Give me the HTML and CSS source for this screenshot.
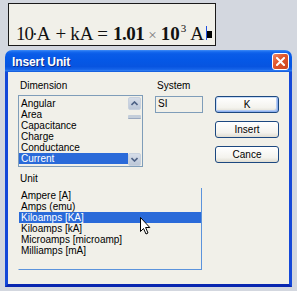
FILE: index.html
```html
<!DOCTYPE html>
<html>
<head>
<meta charset="utf-8">
<link rel="stylesheet" href="styles.css">
</head>
<body>
<div class="page">
  <div class="formula">
    <span class="tok t-10">10</span><span class="tok t-dot">·</span><span class="tok t-a1">A</span>
    <span class="tok t-plus">+</span>
    <span class="tok t-ka">kA</span>
    <span class="tok t-eq">=</span>
    <span class="tok t-res">1.01</span>
    <span class="tok t-times">×</span>
    <span class="tok t-res t-pow">10<sup class="sup">3</sup></span>
    <span class="tok t-a2">A</span><span class="caret"></span><span class="block"></span>
  </div>

  <div class="dialog">
    <div class="titlebar">
      <span class="title">Insert Unit</span>
      <span class="close">
        <svg width="9" height="9" viewBox="0 0 9 9"><path d="M1 1 L8 8 M8 1 L1 8" stroke="#fff" stroke-width="2" stroke-linecap="square" fill="none"/></svg>
      </span>
    </div>
    <div class="body">
      <div class="top">
        <div class="col dim">
          <div class="label">Dimension</div>
          <div class="listbox">
            <ul class="items">
              <li>Angular</li>
              <li>Area</li>
              <li>Capacitance</li>
              <li>Charge</li>
              <li>Conductance</li>
              <li class="sel">Current</li>
            </ul>
            <div class="scrollbar">
              <div class="sbtn">
                <svg width="7" height="5" viewBox="0 0 7 5"><path d="M0.5 4 L3.5 1 L6.5 4" stroke="#4d6185" stroke-width="1.6" fill="none"/></svg>
              </div>
              <div class="thumb"></div>
              <div class="track"></div>
              <div class="sbtn">
                <svg width="7" height="5" viewBox="0 0 7 5"><path d="M0.5 1 L3.5 4 L6.5 1" stroke="#4d6185" stroke-width="1.6" fill="none"/></svg>
              </div>
            </div>
          </div>
        </div>
        <div class="col sys">
          <div class="label">System</div>
          <div class="field">SI</div>
        </div>
        <div class="buttons">
          <div class="btn default">K</div>
          <div class="btn">Insert</div>
          <div class="btn">Cance</div>
        </div>
      </div>
      <div class="unit">
        <div class="label">Unit</div>
        <ul class="unitlist">
          <li>Ampere [A]</li>
          <li>Amps (emu)</li>
          <li class="sel">Kiloamps [KA]</li>
          <li>Kiloamps [kA]</li>
          <li>Microamps [microamp]</li>
          <li>Milliamps [mA]</li>
        </ul>
      </div>
      <svg class="pointer" width="11" height="18" viewBox="0 0 11 18">
        <path d="M0.5 0.5 L0.5 14.5 L3.5 11.5 L6 17 L8 16 L5.6 10.5 L9.8 10.5 Z" fill="#fff" stroke="#000" stroke-width="1"/>
      </svg>
    </div>
  </div>
</div>
</body>
</html>
```
FILE: styles.css
```css
* { box-sizing: border-box; }
html, body { margin: 0; padding: 0; }
body {
  background: #d3d7df;
  width: 297px;
  height: 291px;
  overflow: hidden;
  font-family: "Liberation Sans", Arial, sans-serif;
}
.page {
  padding: 3px 0 0 8px;
}
.formula {
  width: 208px;
  height: 43px;
  border: 1px solid #1a1a1a;
  background: #f1f0e9;
  display: flex;
  align-items: baseline;
  padding: 14px 0 0 7px;
  font-family: "Liberation Serif", "Times New Roman", serif;
  font-size: 19px;
  line-height: 21px;
  color: #111;
  overflow: hidden;
}
.tok { white-space: pre; }
.t-10 { letter-spacing: -1px; }
.t-dot { font-size: 17px; margin-left: -1px; }
.t-a1 { margin-left: -1px; }
.t-plus { margin-left: 5px; }
.t-ka { margin-left: 4px; }
.t-eq { margin-left: 4px; }
.t-res { margin-left: 5px; font-weight: bold; letter-spacing: -0.5px; }
.t-times { margin-left: 4px; color: #777; font-size: 15px; }
.t-pow { margin-left: 4px; letter-spacing: 0; }
.sup { font-size: 11px; font-weight: normal; vertical-align: 8px; margin-left: 1px; }
.t-a2 { margin-left: 4px; }
.caret {
  display: inline-block;
  width: 1px;
  height: 14px;
  background: #2050e0;
  margin-left: 2px;
  align-self: center;
  transform: translateY(1px);
}
.block {
  display: inline-block;
  width: 5px;
  height: 7px;
  background: #000;
  align-self: center;
  transform: translateY(3px);
}

.dialog {
  margin: 4px 0 0 -3px;
  width: 287px;
  height: 237px;
  display: flex;
  flex-direction: column;
}
.titlebar {
  height: 22px;
  border-radius: 7px 7px 0 0;
  background: linear-gradient(#3f8cf7 0, #1468ee 2px, #0a5ce8 4px, #0558e6 45%, #0754e0 75%, #1462e8 88%, #2e7bf0 94%, #0a52d6 100%);
  display: flex;
  align-items: center;
  justify-content: space-between;
  padding: 0 3px 0 7px;
  position: relative;
}
.title {
  color: #fff;
  font-weight: bold;
  font-size: 12px;
  letter-spacing: -0.1px;
  text-shadow: 1px 1px 0 #0a2a8a;
  margin-top: 1px;
}
.close {
  width: 17px;
  height: 17px;
  border: 1px solid #fff;
  border-radius: 3px;
  background: linear-gradient(135deg, #f08a6a 0, #e0582e 40%, #cc4520 100%);
  display: flex;
  align-items: center;
  justify-content: center;
  margin-top: 1px;
}
.body {
  flex: 1;
  background: #f1f0e9;
  border-left: 3px solid #1448d8;
  border-right: 3px solid #1448d8;
  border-bottom: 3px solid #0826b0;
  position: relative;
  padding: 8px 0 0 10px;
  font-size: 10px;
  color: #000;
}
.label {
  height: 11px;
  line-height: 11px;
  padding-left: 2px;
}
.top {
  display: flex;
  align-items: flex-start;
}
.col.dim { width: 125px; }
.col.sys { width: 48px; margin-left: 12px; }
.listbox {
  margin-top: 4px;
  height: 72px;
  border: 1px solid #7f9db9;
  display: flex;
  padding: 2px 1px 0 0;
}
ul { list-style: none; margin: 0; padding: 0; }
.items {
  flex: 1;
}
.items li, .unitlist li {
  height: 11px;
  line-height: 11px;
  padding-left: 2px;
  white-space: nowrap;
}
.items li.sel, .unitlist li.sel {
  background: #2a6ad9;
  color: #fff;
}
.scrollbar {
  width: 13px;
  display: flex;
  flex-direction: column;
  margin-top: -1px;
}
.sbtn {
  height: 13px;
  border-radius: 2px;
  background: linear-gradient(#d6dde8, #bcc7d8);
  border: 1px solid #c8d1de;
  display: flex;
  align-items: center;
  justify-content: center;
}
.thumb {
  height: 4px;
  margin-top: 5px;
  border-radius: 1px;
  background: #c4ceda;
  border-bottom: 1px solid #9aa8bf;
}
.track { flex: 1; }
.field {
  margin-top: 5px;
  height: 17px;
  border: 1px solid #7f9db9;
  line-height: 14px;
  padding-left: 2px;
}
.buttons {
  margin-left: 12px;
  margin-top: 16px;
  display: flex;
  flex-direction: column;
  gap: 8px;
}
.btn {
  width: 64px;
  height: 17px;
  border: 1px solid #1c4880;
  border-radius: 3px;
  background: linear-gradient(#ffffff, #f4f3ee 70%, #e0ddd2);
  text-align: center;
  line-height: 15px;
}
.btn.default {
  box-shadow: inset -1px -1px 0 #8eb0ef, inset 1px 1px 0 #c8dcf8, inset -2px -2px 0 #b4cbf2;
}
.unit {
  margin-top: 6px;
}
.unitlist {
  margin-top: 4px;
  width: 184px;
  height: 82px;
  border-right: 1px solid #5b93dc;
  border-bottom: 1px solid #5b93dc;
  border-left: 1px solid transparent;
  padding-top: 2px;
}
.pointer {
  position: absolute;
  left: 132px;
  top: 145px;
}
```
